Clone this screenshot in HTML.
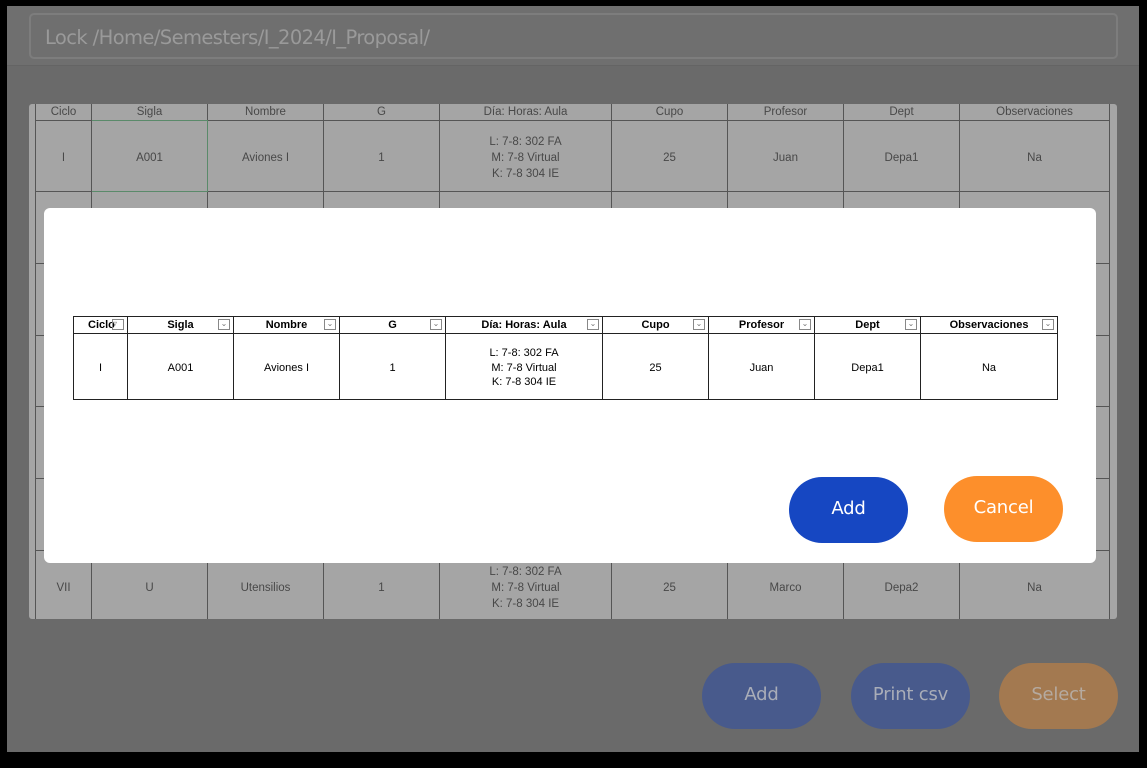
<!DOCTYPE html>
<html><head><meta charset="utf-8"><style>
*{margin:0;padding:0;box-sizing:border-box}
body{width:1147px;height:768px;background:#000;position:relative;overflow:hidden;font-family:"Liberation Sans",sans-serif}
#app{position:absolute;left:7px;top:6px;width:1132px;height:746px;background:#6a6a6a}
#hdr{position:absolute;left:0;top:0;width:1132px;height:60px;background:#6f6f6f;border-bottom:1px solid #646464}
#path{position:absolute;left:22px;top:7px;width:1089px;height:46px;border:2px solid #7d7d7d;border-radius:5px;color:#9a9a9a;font-size:19.5px;font-family:"DejaVu Sans","Liberation Sans",sans-serif;padding:11px 0 0 14px;letter-spacing:-0.6px}
#bg{position:absolute;left:29px;top:104px;width:1088px;height:515px;background:#a5a5a5;border-radius:3px;overflow:hidden}
.bt{position:absolute;border-collapse:collapse;table-layout:fixed;font-size:11.5px;color:#484848;text-align:center}
.bt td{border:1px solid #555;line-height:16px}
.bt tr.r td{padding-top:3px}
.bt tr.h td{height:16px;font-weight:normal}
#modal{position:absolute;left:44px;top:208px;width:1052px;height:355px;background:#fff;border-radius:6px}
.mt{position:absolute;left:29px;top:108px;border-collapse:collapse;table-layout:fixed;font-size:11px;color:#000;text-align:center}
.mt td{border:1px solid #222;line-height:14.5px;position:relative}
.mt tr.r td{padding-top:3px}
.mt tr.h td{height:17px;font-weight:bold}
.dd{position:absolute;right:3px;top:2px;width:12px;height:11px;border:1px solid #888;font-size:8px;line-height:8px;color:#777;font-weight:normal}
.btn{position:absolute;width:119px;height:66px;border-radius:33px;color:#fff;font-size:18px;font-family:"DejaVu Sans","Liberation Sans",sans-serif;text-align:center;line-height:64px;letter-spacing:-0.2px}
</style></head><body>
<div id="app">
<div id="hdr"><div id="path">Lock /Home/Semesters/I_2024/I_Proposal/</div></div>
</div>
<div id="bg">
<table class="bt" style="left:6px;top:-1px;width:1074px">
<colgroup><col style="width:56px"><col style="width:116px"><col style="width:116px"><col style="width:116px"><col style="width:172px"><col style="width:116px"><col style="width:116px"><col style="width:116px"><col style="width:150px"></colgroup>
<tr class="h"><td>Ciclo</td><td style="border-bottom:1px solid #5a8a6a">Sigla</td><td>Nombre</td><td>G</td><td>Día: Horas: Aula</td><td>Cupo</td><td>Profesor</td><td>Dept</td><td>Observaciones</td></tr>
<tr class="r" style="height:71px"><td>I</td><td style="border:1px solid #5a8a6a">A001</td><td>Aviones I</td><td>1</td><td>L: 7-8: 302 FA<br>M: 7-8 Virtual<br>K: 7-8 304 IE</td><td>25</td><td>Juan</td><td>Depa1</td><td>Na</td></tr>
<tr style="height:72px"><td></td><td></td><td></td><td></td><td></td><td></td><td></td><td></td><td></td></tr>
<tr style="height:72px"><td></td><td></td><td></td><td></td><td></td><td></td><td></td><td></td><td></td></tr>
<tr style="height:71px"><td></td><td></td><td></td><td></td><td></td><td></td><td></td><td></td><td></td></tr>
<tr style="height:72px"><td></td><td></td><td></td><td></td><td></td><td></td><td></td><td></td><td></td></tr>
<tr style="height:72px"><td></td><td></td><td></td><td></td><td></td><td></td><td></td><td></td><td></td></tr>
<tr class="r" style="height:72px"><td>VII</td><td>U</td><td>Utensilios</td><td>1</td><td>L: 7-8: 302 FA<br>M: 7-8 Virtual<br>K: 7-8 304 IE</td><td>25</td><td>Marco</td><td>Depa2</td><td>Na</td></tr>
</table>
</div>
<div id="modal">
<table class="mt" style="width:984px">
<colgroup><col style="width:54px"><col style="width:106px"><col style="width:106px"><col style="width:106px"><col style="width:157px"><col style="width:106px"><col style="width:106px"><col style="width:106px"><col style="width:137px"></colgroup>
<tr class="h"><td style="text-align:left;padding-left:14px">Ciclo<span class="dd">▿</span></td><td>Sigla<span class="dd">⌄</span></td><td>Nombre<span class="dd">⌄</span></td><td>G<span class="dd">⌄</span></td><td>Día: Horas: Aula<span class="dd">⌄</span></td><td>Cupo<span class="dd">⌄</span></td><td>Profesor<span class="dd">⌄</span></td><td>Dept<span class="dd">⌄</span></td><td>Observaciones<span class="dd">⌄</span></td></tr>
<tr class="r" style="height:66px"><td>I</td><td>A001</td><td>Aviones I</td><td>1</td><td>L: 7-8: 302 FA<br>M: 7-8 Virtual<br>K: 7-8 304 IE</td><td>25</td><td>Juan</td><td>Depa1</td><td>Na</td></tr>
</table>
<div class="btn" style="left:745px;top:269px;background:#1647c2">Add</div>
<div class="btn" style="left:900px;top:268px;background:#fd8f2b">Cancel</div>
</div>
<div class="btn" style="left:702px;top:663px;background:#485a8c;color:#a9adb8">Add</div>
<div class="btn" style="left:851px;top:663px;background:#485a8c;color:#a9adb8">Print csv</div>
<div class="btn" style="left:999px;top:663px;background:#a37950;color:#b5aaa0">Select</div>
</body></html>
